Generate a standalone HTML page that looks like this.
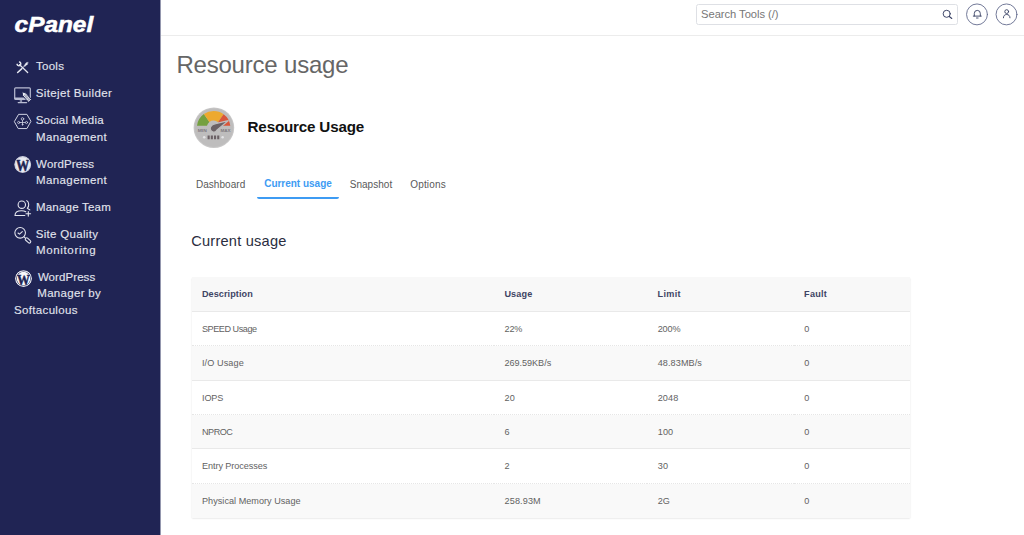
<!DOCTYPE html>
<html lang="en">
<head>
<meta charset="utf-8">
<title>Resource usage</title>
<style>
*{margin:0;padding:0;box-sizing:border-box}
html,body{width:1024px;height:535px;overflow:hidden;background:#fff}
body{position:relative;font-family:"Liberation Sans",sans-serif;font-size:11.2px;color:#333}
.t{position:absolute;white-space:nowrap;line-height:1;display:block}
a{color:inherit;text-decoration:none}
ul{list-style:none}
aside{position:absolute;left:0;top:0;width:161px;height:535px;background:#202454;border-right:1px solid #9497ae;background-clip:padding-box;z-index:2}
aside svg{position:absolute;overflow:visible}
.logo{position:absolute;left:0;top:0}
.sb{font-size:11.5px;font-weight:400;color:#e2e4ee;-webkit-text-stroke:0.12px #e2e4ee}
header{position:absolute;left:160px;top:0;width:864px;height:36px;background:#fff;border-bottom:1px solid #ececec}
.search{position:absolute;left:536.1px;top:3.6px;width:261.5px;height:21.8px;border:1px solid #dee0e5;border-radius:2.5px;background:#fff}
.ph{font-size:11.2px;color:#777}
.circ{position:absolute;top:3px;width:22px;height:22px;border-radius:50%;background:transparent}
header svg{position:absolute;overflow:visible}
main{position:absolute;left:160px;top:36px;width:864px;height:499px;background:#fff}
main svg{position:absolute;overflow:visible}
.h1{font-size:24px;font-weight:400;color:#666}
.h2{font-size:15.2px;font-weight:700;color:#111}
.tab{font-size:10px;color:#595959}
.tab.on{color:#3d9bf3;font-weight:700}
.tabline{position:absolute;left:96.5px;top:160.8px;width:82.8px;height:2.7px;background:#3d9bf3;border-radius:0 0 3px 3px}
.h3{font-size:14.6px;font-weight:400;color:#2a2d40}
table{position:absolute;left:32px;top:241px;width:718.3px;border-collapse:collapse;table-layout:fixed;box-shadow:0 0.6px 1.6px rgba(0,0,0,.14)}
tr{height:34.4px}
th,td{position:relative}
td{border-top:1px solid #e9e9e9}
tbody tr:nth-child(even) td{border-top:1px dotted #e6e6e6}
thead tr{background:#f8f8f8}
tbody tr:nth-child(even){background:#f9f9f9}
tbody tr:nth-child(odd){background:#fff}
.th{font-size:9.1px;font-weight:700;color:#3e4464}
.td{font-size:9.1px;color:#626262}
</style>
</head>
<body>
<aside>
<a class="logo" href="#"><svg width="110" height="40" viewBox="0 0 110 40" style="left:0;top:0"><text transform="translate(14.6 32.35) scale(1 0.87)" font-family="Liberation Sans, sans-serif" font-weight="700" font-style="italic" font-size="24.4" fill="#fff" stroke="#fff" stroke-width="0.6" textLength="78.6" lengthAdjust="spacingAndGlyphs">cPanel</text></svg></a>
<nav><ul>
<li><a href="#"><svg width="15" height="15" viewBox="0 0 15 15" style="left:16px;top:61px" fill="none" stroke="#e4e6ef" stroke-linecap="round" stroke-linejoin="round"><g transform="translate(0.30 0.30) scale(0.9538)">
<path d="M3.5 3.6 L11.9 11.7" stroke-width="1.35"/>
<path d="M3.4 0.7 A2.0 2.0 0 1 1 0.8 3.2" stroke-width="1.55"/>
<path d="M12.1 1.0 L10.3 1.6 L8.1 4.6 L8.9 5.4 L11.7 3.0 Z" fill="#e4e6ef" stroke-width="0.4"/>
<path d="M8.5 5.0 L5.6 7.9" stroke-width="0.9"/>
<path d="M5.6 7.9 L1.4 11.8" stroke-width="1.6"/>
</g></svg>
<span class="t sb" style="left:36.00px;top:61.21px;letter-spacing:0.260px;">Tools</span>
</a></li>
<li><a href="#"><svg width="20" height="19" viewBox="0 0 20 19" style="left:14px;top:87px" fill="none" stroke="#b9bcd2" stroke-linecap="round" stroke-linejoin="round"><g transform="translate(0.00 0.00)">
<rect x="0.7" y="0.9" width="15.6" height="11.5" rx="0.9" stroke-width="1.2"/>
<path d="M0.9 11.2 H16.1" stroke-width="1.5"/>
<path d="M6.3 12.8 V15.2 M7.6 12.8 V15.2" stroke-width="0.8"/>
<path d="M4.2 15.6 H12.6" stroke-width="1.2"/>
<g transform="translate(8.2 4.8) rotate(50)">
<path d="M0 0 L3.4 -2.05 L12.0 -2.05 L12.0 2.05 L3.4 2.05 Z" fill="#eceef5" stroke="#202454" stroke-width="0.9"/>
<path d="M4.3 -0.6 H9.4 M4.3 0.6 H9.4" stroke="#202454" stroke-width="0.45" stroke-dasharray="1.1 0.7"/>
<path d="M10.3 -2 V2" stroke="#202454" stroke-width="0.5"/>
</g>
</g></svg>
<span class="t sb" style="left:35.70px;top:88.00px;letter-spacing:0.367px;">Sitejet Builder</span>
</a></li>
<li><a href="#"><svg width="20" height="18" viewBox="0 0 20 18" style="left:14px;top:113px" fill="none" stroke="#cfd2e2" stroke-linecap="round" stroke-linejoin="round"><g transform="translate(0.00 0.50)">
<path d="M0.55 7.8 L4.6 0.85 H12.9 L16.95 7.8 L12.9 15.05 H4.6 Z" stroke-width="1"/>
<circle cx="8.5" cy="5.4" r="1.25" stroke-width="0.8"/>
<circle cx="4.7" cy="9.0" r="1.1" stroke-width="0.8"/>
<circle cx="12.5" cy="9.0" r="1.1" stroke-width="0.8"/>
<path d="M5.9 9 H11.3 M8.5 6.8 V11.4" stroke-width="0.8"/>
<circle cx="8.5" cy="11.1" r="0.6" fill="#cfd2e2" stroke-width="0.5"/>
</g></svg>
<span class="t sb" style="left:35.70px;top:115.00px;letter-spacing:0.187px;">Social Media</span>
<span class="t sb" style="left:35.90px;top:131.50px;letter-spacing:0.419px;">Management</span>
</a></li>
<li><a href="#"><svg width="20" height="20" viewBox="0 0 20 20" style="left:13px;top:155px"><g transform="translate(0.70 0.60)">
<circle cx="9" cy="9" r="8.5" fill="#c9ccdb"/>
<circle cx="9" cy="9" r="7.6" fill="#e9ebf2"/>
<text transform="translate(9 15.2) scale(0.82 1)" text-anchor="middle" font-family="Liberation Serif, serif" font-weight="700" font-size="16.2" fill="#202454" stroke="#202454" stroke-width="0.5">W</text>
<circle cx="9" cy="9" r="8.0" fill="none" stroke="#c9ccdb" stroke-width="1.1"/>
<circle cx="9" cy="9" r="9.3" fill="none" stroke="#202454" stroke-width="1.6"/>
</g></svg>
<span class="t sb" style="left:36.10px;top:158.61px;letter-spacing:0.141px;">WordPress</span>
<span class="t sb" style="left:35.90px;top:175.11px;letter-spacing:0.419px;">Management</span>
</a></li>
<li><a href="#"><svg width="20" height="19" viewBox="0 0 20 19" style="left:14px;top:200px" fill="none" stroke="#e4e6ef" stroke-width="1.1" stroke-linecap="round" stroke-linejoin="round"><g transform="translate(0.00 0.00)">
<circle cx="7.8" cy="4.7" r="3.7"/>
<path d="M12.8 0.6 C15.1 2.0 15.4 6.3 13.3 8.3 L15.8 9.9"/>
<path d="M10.8 15.5 H1.0 C1.0 12.2 4.4 10.8 7.6 10.8 C9.4 10.8 10.9 11.2 11.8 11.7"/>
<path d="M14.3 11.5 V16.1 M12.0 13.8 H16.6"/>
</g></svg>
<span class="t sb" style="left:35.90px;top:201.91px;letter-spacing:0.223px;">Manage Team</span>
</a></li>
<li><a href="#"><svg width="20" height="20" viewBox="0 0 20 20" style="left:14px;top:226px" fill="none" stroke="#e4e6ef" stroke-width="1.05" stroke-linecap="round" stroke-linejoin="round"><g transform="translate(0.00 0.50)">
<circle cx="6.15" cy="6.3" r="5.3"/>
<path d="M4.0 6.5 L5.5 7.7 L8.3 5.1"/>
<path d="M10.1 10.4 L11.6 11.8"/>
<rect x="-3.2" y="-1.4" width="6.4" height="2.8" rx="1.4" transform="translate(14 13.9) rotate(42)"/>
</g></svg>
<span class="t sb" style="left:35.70px;top:228.50px;letter-spacing:0.308px;">Site Quality</span>
<span class="t sb" style="left:35.90px;top:245.00px;letter-spacing:0.666px;">Monitoring</span>
</a></li>
<li><a href="#"><svg width="20" height="20" viewBox="0 0 20 20" style="left:14px;top:269px"><g transform="translate(0.50 0.60)">
<circle cx="9" cy="9" r="8.45" fill="#eceef4"/>
<circle cx="9" cy="9" r="7.45" fill="#202454"/>
<circle cx="9" cy="9" r="6.8" fill="#f7f8fb"/>
<text transform="translate(9 14.9) scale(0.85 1)" text-anchor="middle" font-family="Liberation Serif, serif" font-weight="700" font-size="15.2" fill="#202454" stroke="#202454" stroke-width="0.45">W</text>
<circle cx="9" cy="9" r="7.95" fill="none" stroke="#eceef4" stroke-width="1.0"/>
<circle cx="9" cy="9" r="9.25" fill="none" stroke="#202454" stroke-width="1.6"/>
</g></svg>
<span class="t sb" style="left:37.90px;top:271.91px;letter-spacing:0.079px;">WordPress</span>
<span class="t sb" style="left:37.30px;top:288.30px;letter-spacing:0.296px;">Manager by</span>
<span class="t sb" style="left:14.00px;top:304.80px;letter-spacing:0.339px;">Softaculous</span>
</a></li>
</ul></nav>
</aside>
<header>
<div class="search">
<span class="t ph" style="left:4.00px;top:4.61px;letter-spacing:-0.049px;">Search Tools (/)</span>
</div>
<svg width="92" height="32" viewBox="0 0 92 32" style="left:776px;top:0px" fill="none" stroke="#363e62" stroke-linecap="round" stroke-linejoin="round"><g transform="translate(0.00 0.00)">
<circle cx="41" cy="14.4" r="10.45" stroke="#636b8d" stroke-width="0.9"/>
<circle cx="70.5" cy="14.4" r="10.45" stroke="#636b8d" stroke-width="0.9"/>
<circle cx="10.7" cy="13.8" r="3.55" stroke-width="0.95"/>
<path d="M13.3 16.5 L15.8 18.5" stroke-width="1.05"/>
<path d="M38.3 16.0 V13.4 A3.0 3.0 0 0 1 44.3 13.4 V16.0 M37.3 16.1 H45.3 M40.5 18.0 H42.1" stroke-width="0.9"/>
<circle cx="70.7" cy="11.6" r="1.9" stroke-width="0.9"/>
<path d="M67.4 17.8 C67.4 15.6 68.9 14.5 70.7 14.5 C72.5 14.5 74.0 15.6 74.0 17.8" stroke-width="0.9"/>
</g></svg>
<div class="circ" style="left:806.0px"></div>
<div class="circ" style="left:835.8px"></div>
</header>
<main>
<h1 class="t h1" style="left:16.40px;top:17.00px;letter-spacing:-0.199px;">Resource usage</h1>
<svg width="43" height="43" viewBox="0 0 43 43" style="left:33px;top:71px"><g transform="translate(0.40 0.20)">
<circle cx="20.5" cy="20.5" r="20.3" fill="#c8c7c7"/>
<circle cx="20.5" cy="20.5" r="19.3" fill="#bebdbd"/>
<path d="M3.6 18.5 A16.6 16.6 0 0 1 10.5 6.9 L16.0 14.8 A6.6 6.6 0 0 0 13.6 18.5 Z" fill="#74a040"/>
<path d="M10.5 6.9 A16.6 16.6 0 0 1 30.2 7.0 L24.6 15.0 A6.6 6.6 0 0 0 16.0 14.8 Z" fill="#eda92f"/>
<path d="M30.2 7.0 A16.6 16.6 0 0 1 36.9 18.5 L26.9 18.5 A6.6 6.6 0 0 0 24.6 15.0 Z" fill="#d9553a"/>
<path d="M34.8 13.5 L23.4 23.0 A3.4 3.4 0 0 1 17.3 19.6 C18.3 17.4 20.2 16.9 22.3 16.5 Z" fill="#6b6165" stroke="#bebdbd" stroke-width="1.2" stroke-linejoin="round"/>
<text x="4.4" y="24.5" font-family="Liberation Sans, sans-serif" font-weight="700" font-size="3.9" fill="#7f7a80" textLength="9.0" lengthAdjust="spacingAndGlyphs">MIN</text>
<text x="27.0" y="24.5" font-family="Liberation Sans, sans-serif" font-weight="700" font-size="3.9" fill="#7f7a80" textLength="10.2" lengthAdjust="spacingAndGlyphs">MAX</text>
<path d="M14.2 28.3 h2.1 v3.8 h-2.1 z M17.4 28.3 h2.1 v3.8 h-2.1 z M20.6 28.3 h2.1 v3.8 h-2.1 z M23.8 28.3 h2.1 v3.8 h-2.1 z" fill="#6b6165"/>
<circle cx="10.8" cy="30.1" r="1.25" fill="#e4e4e6"/>
<circle cx="29.2" cy="30.1" r="1.25" fill="#e4e4e6"/>
</g></svg>
<h2 class="t h2" style="left:87.60px;top:83.21px;letter-spacing:-0.187px;">Resource Usage</h2>
<nav>
<a class="t tab" style="left:35.90px;top:143.50px;letter-spacing:0.047px;">Dashboard</a>
<a class="t tab on" style="left:104.20px;top:142.91px;letter-spacing:-0.016px;">Current usage</a>
<a class="t tab" style="left:189.70px;top:143.50px;letter-spacing:0.033px;">Snapshot</a>
<a class="t tab" style="left:250.20px;top:143.50px;letter-spacing:0.189px;">Options</a>
<div class="tabline"></div>
</nav>
<h3 class="t h3" style="left:31.20px;top:197.61px;letter-spacing:0.226px;">Current usage</h3>
<table><colgroup><col style="width:302.0px"><col style="width:153.0px"><col style="width:146.5px"><col style="width:116.8px"></colgroup>
<thead><tr>
<th><span class="t th" style="left:9.90px;top:13.30px;letter-spacing:0.087px;">Description</span></th>
<th><span class="t th" style="left:10.40px;top:13.30px;letter-spacing:0.151px;">Usage</span></th>
<th><span class="t th" style="left:10.60px;top:13.30px;letter-spacing:0.291px;">Limit</span></th>
<th><span class="t th" style="left:10.60px;top:13.30px;letter-spacing:0.266px;">Fault</span></th>
</tr></thead><tbody>
<tr>
<td><span class="t td" style="left:10.00px;top:12.92px;letter-spacing:-0.456px;">SPEED Usage</span></td>
<td><span class="t td" style="left:10.50px;top:12.92px;letter-spacing:-0.150px;">22%</span></td>
<td><span class="t td" style="left:10.70px;top:12.92px;letter-spacing:-0.122px;">200%</span></td>
<td><span class="t td" style="left:10.70px;top:12.92px;">0</span></td>
</tr>
<tr>
<td><span class="t td" style="left:10.00px;top:12.93px;letter-spacing:0.093px;">I/O Usage</span></td>
<td><span class="t td" style="left:10.50px;top:12.93px;letter-spacing:-0.037px;">269.59KB/s</span></td>
<td><span class="t td" style="left:10.70px;top:12.93px;letter-spacing:0.089px;">48.83MB/s</span></td>
<td><span class="t td" style="left:10.70px;top:12.93px;">0</span></td>
</tr>
<tr>
<td><span class="t td" style="left:10.00px;top:12.94px;letter-spacing:-0.150px;">IOPS</span></td>
<td><span class="t td" style="left:10.50px;top:12.94px;letter-spacing:0.150px;">20</span></td>
<td><span class="t td" style="left:10.70px;top:12.94px;letter-spacing:0.122px;">2048</span></td>
<td><span class="t td" style="left:10.70px;top:12.94px;">0</span></td>
</tr>
<tr>
<td><span class="t td" style="left:10.00px;top:12.95px;letter-spacing:-0.500px;">NPROC</span></td>
<td><span class="t td" style="left:10.50px;top:12.95px;">6</span></td>
<td><span class="t td" style="left:10.70px;top:12.95px;letter-spacing:0.150px;">100</span></td>
<td><span class="t td" style="left:10.70px;top:12.95px;">0</span></td>
</tr>
<tr>
<td><span class="t td" style="left:10.00px;top:12.96px;letter-spacing:-0.066px;">Entry Processes</span></td>
<td><span class="t td" style="left:10.50px;top:12.96px;">2</span></td>
<td><span class="t td" style="left:10.70px;top:12.96px;letter-spacing:0.150px;">30</span></td>
<td><span class="t td" style="left:10.70px;top:12.96px;">0</span></td>
</tr>
<tr>
<td><span class="t td" style="left:10.00px;top:12.97px;letter-spacing:0.028px;">Physical Memory Usage</span></td>
<td><span class="t td" style="left:10.50px;top:12.97px;letter-spacing:0.135px;">258.93M</span></td>
<td><span class="t td" style="left:10.70px;top:12.97px;letter-spacing:0.059px;">2G</span></td>
<td><span class="t td" style="left:10.70px;top:12.97px;">0</span></td>
</tr>
</tbody></table>
</main>
</body>
</html>
